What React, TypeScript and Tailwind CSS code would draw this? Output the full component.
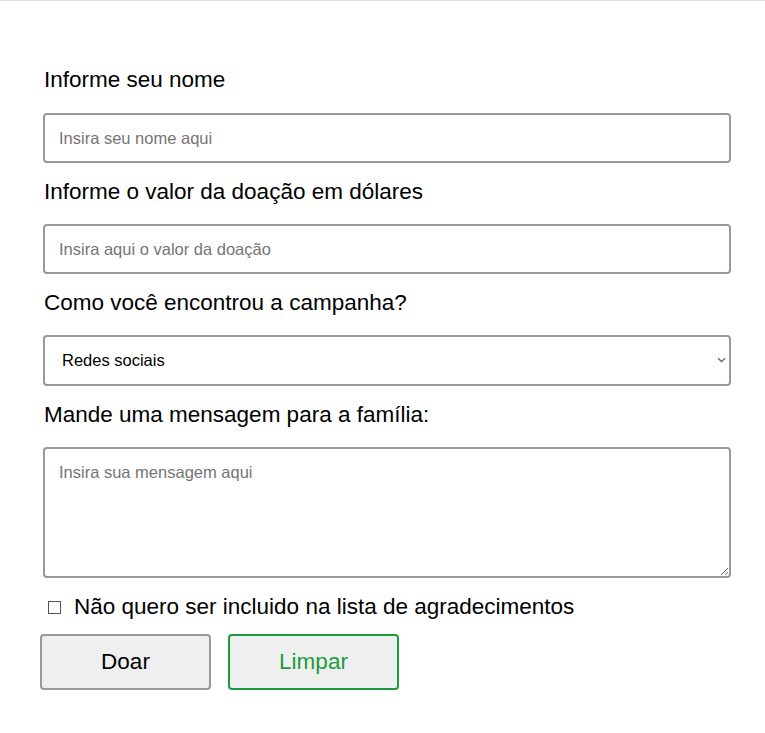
import React from "react";

export default function App() {
  const font = { fontFamily: '"Liberation Sans", Arial, sans-serif' };
  return (
    <div className="min-h-[733px] w-full bg-white border-t border-[#dcdcdc]" style={font}>
      <form className="flex flex-col pl-[43px] pr-[34px] pt-[66px]" onSubmit={(e) => e.preventDefault()}>
        <label className="text-[22.5px] leading-[26px] text-black pl-px">Informe seu nome</label>
        <input
          className="mt-[20px] h-[50px] w-[688px] rounded-[4px] border-2 border-[#999999] px-[14px] text-[16.5px] text-black placeholder:text-[#757575] outline-none"
          placeholder="Insira seu nome aqui"
        />
        <label className="mt-[16px] text-[22.5px] leading-[26px] text-black pl-px">Informe o valor da doação em dólares</label>
        <input
          className="mt-[19px] h-[50px] w-[688px] rounded-[4px] border-2 border-[#999999] px-[14px] text-[16.5px] text-black placeholder:text-[#757575] outline-none"
          placeholder="Insira aqui o valor da doação"
        />
        <label className="mt-[16px] text-[22.5px] leading-[26px] text-black pl-px">Como você encontrou a campanha?</label>
        <div className="relative mt-[19px] w-[688px]">
          <select
            className="h-[51px] w-full appearance-none rounded-[4px] border-2 border-[#999999] bg-white pl-[17px] text-[16.5px] text-black outline-none"
            defaultValue="redes"
          >
            <option value="redes">Redes sociais</option>
            <option value="amigos">Amigos</option>
            <option value="outros">Outros</option>
          </select>
          <svg
            className="pointer-events-none absolute right-[5px] top-[22px]"
            width="9"
            height="6"
            viewBox="0 0 9 6"
            fill="none"
          >
            <path d="M1 1.2 L4.5 4.6 L8 1.2" stroke="#6b6b6b" strokeWidth="1.4" />
          </svg>
        </div>
        <label className="mt-[16px] text-[22.5px] leading-[26px] text-black pl-px">Mande uma mensagem para a família:</label>
        <textarea
          className="mt-[19px] h-[131px] w-[688px] rounded-[4px] border-2 border-[#999999] px-[14px] py-[11px] text-[16.5px] text-black placeholder:text-[#757575] outline-none"
          placeholder="Insira sua mensagem aqui"
        />
        <label className="mt-[16px] flex items-center text-[22.5px] leading-[26px] text-black">
          <span className="ml-[5px] mr-[13px] inline-block h-[13px] w-[13px] border border-[#555555]" />
          Não quero ser incluido na lista de agradecimentos
        </label>
        <div className="mt-[14px] flex gap-[17px] -ml-[3px]">
          <button type="submit" className="h-[56px] w-[171px] rounded-[4px] border-2 border-[#999999] bg-[#efefef] text-[22.5px] text-black">
            Doar
          </button>
          <button type="reset" className="h-[56px] w-[171px] rounded-[4px] border-2 border-[#1a9c3e] bg-[#efefef] text-[22.5px] text-[#1a9c3e]">
            Limpar
          </button>
        </div>
      </form>
    </div>
  );
}
